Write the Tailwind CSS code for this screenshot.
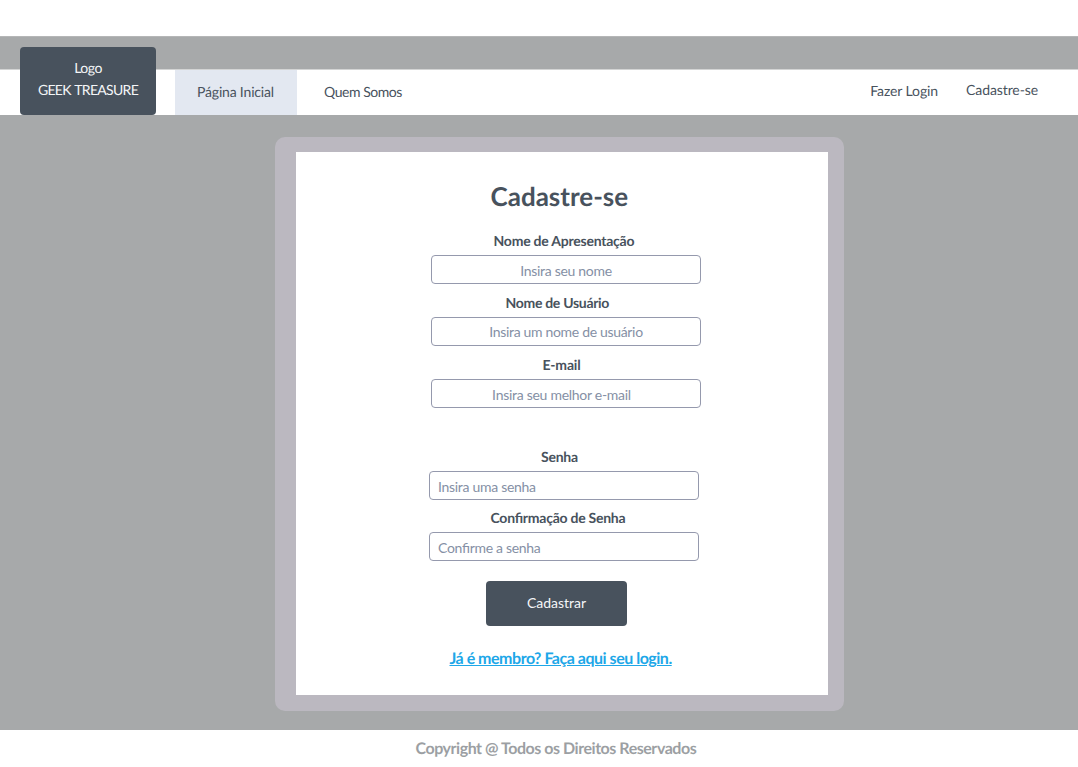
<!DOCTYPE html>
<html lang="pt-BR">
<head>
<meta charset="utf-8">
<meta name="viewport" content="width=device-width, initial-scale=1">
<title>Cadastre-se</title>
<script src="https://cdn.jsdelivr.net/npm/@tailwindcss/browser@4"></script>
</head>
<body class="flex h-[767px] flex-col overflow-hidden bg-white font-['Lato',sans-serif] text-[14px] text-[#48525d] whitespace-nowrap [font-feature-settings:'liga'_1] [text-rendering:geometricPrecision]">
  <header class="relative mt-9 border-t border-[#b5b6b7] bg-[#a7a9aa] pt-8">
    <nav class="flex h-[46px] border-t border-[#d3d4d4] bg-white pl-[175px] leading-5">
      <a class="w-[121.5px] bg-[#e3e8f1] pt-3 pl-[22px] tracking-[-0.18px]">Página Inicial</a>
      <a class="pt-3 pl-[27.5px] tracking-[-0.45px]">Quem Somos</a>
      <a class="ml-auto pt-[11px] tracking-[-0.1px]">Fazer Login</a>
      <a class="mr-10 ml-7 pt-2.5 tracking-[-0.1px]">Cadastre-se</a>
    </nav>
    <div class="absolute top-2.5 left-5 flex h-[68px] w-[136px] flex-col items-center rounded bg-[#48525d] pt-2.5 leading-[21.5px] text-[#f4f6f8]">
      <span class="tracking-[-0.5px]">Logo</span>
      <span class="tracking-[-0.7px] [word-spacing:1px]">GEEK TREASURE</span>
    </div>
  </header>
  <main class="h-[615px] bg-[#a7a9aa] pt-[22px] pl-[275px]">
    <section class="h-[574px] w-[569px] rounded-[10px] bg-[#bbb8c0] pt-[15px] pl-[21px]">
      <form class="flex h-[543px] w-[531.5px] flex-col items-start bg-white">
        <h1 class="mt-7 ml-[194.5px] h-8 text-[26px] leading-8 font-bold">Cadastre-se</h1>
        <label class="mt-[19px] ml-[197.5px] h-5 leading-5 font-bold tracking-[-0.23px]">Nome de Apresentação</label>
        <input class="mt-1 ml-[135px] h-[29px] w-[270px] rounded border border-[#9599ad] pt-px text-center tracking-[-0.3px] placeholder:text-[#8590a5]" placeholder="Insira seu nome">
        <label class="mt-[9px] ml-[209.5px] h-5 leading-5 font-bold tracking-[-0.3px]">Nome de Usuário</label>
        <input class="mt-1 ml-[135px] h-[29px] w-[270px] rounded border border-[#9599ad] text-center tracking-[-0.32px] placeholder:text-[#8590a5]" placeholder="Insira um nome de usuário">
        <label class="mt-[9px] ml-[246.5px] h-5 leading-5 font-bold tracking-[-0.2px]">E-mail</label>
        <input class="mt-1 ml-[135px] h-[29px] w-[270px] rounded border border-[#9599ad] pt-px pr-[9px] text-center tracking-[-0.28px] placeholder:text-[#8590a5]" placeholder="Insira seu melhor e-mail">
        <label class="mt-[39px] ml-[245px] h-5 leading-5 font-bold tracking-[-0.25px]">Senha</label>
        <input class="mt-1 ml-[133px] h-[29px] w-[270px] rounded border border-[#9599ad] pt-px pl-2 tracking-[-0.3px] placeholder:text-[#8590a5]" placeholder="Insira uma senha">
        <label class="mt-2 ml-[194.5px] h-5 leading-5 font-bold tracking-[-0.25px]">Confirmação de Senha</label>
        <input class="mt-1 ml-[133px] h-[29px] w-[270px] rounded border border-[#9599ad] pt-px pl-2 tracking-[-0.3px] placeholder:text-[#8590a5]" placeholder="Confirme a senha">
        <button type="button" class="mt-5 ml-[190px] h-[45px] w-[141px] rounded bg-[#48525d] pb-0.5 text-[#f4f6f8]">Cadastrar</button>
        <a class="mt-[23px] ml-[153.5px] h-5 text-[16px] leading-5 font-bold tracking-[-0.48px] text-[#1da7e8] underline">Já é membro? Faça aqui seu login.</a>
      </form>
    </section>
  </main>
  <footer class="pt-[9px] pl-[415.5px] text-[16px] leading-5 font-bold tracking-[-0.46px] text-[#9c9fa3]">Copyright @ Todos os Direitos Reservados</footer>
</body>
</html>
